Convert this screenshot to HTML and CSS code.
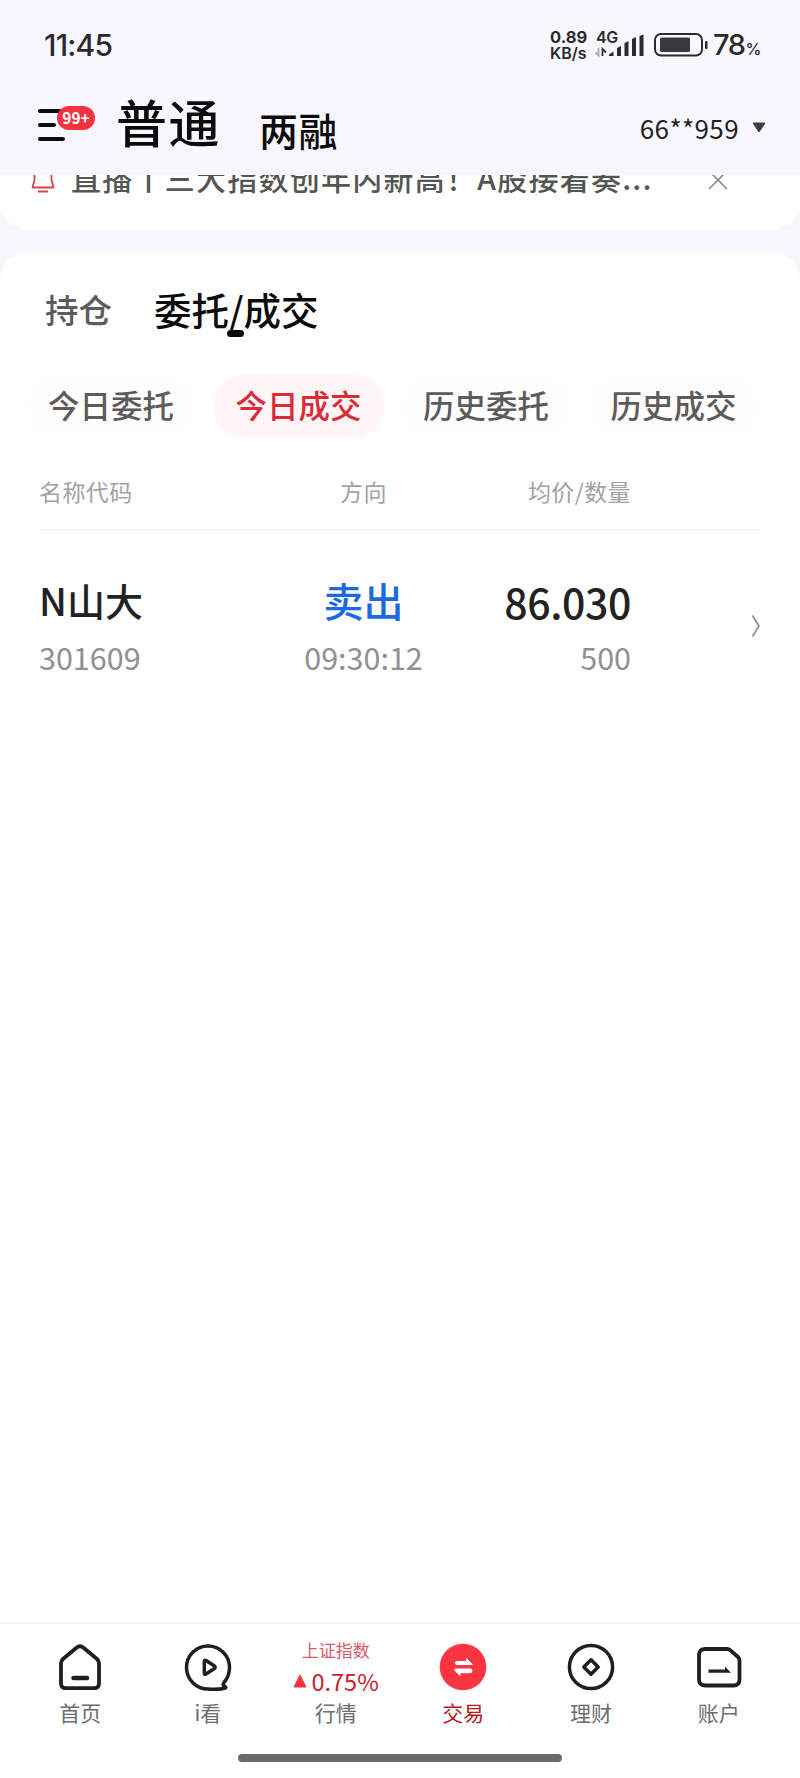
FILE: index.html
```html
<!DOCTYPE html>
<html lang="zh-CN">
<head>
  <meta charset="UTF-8" />
  <meta name="viewport" content="width=device-width, initial-scale=1.0" />
  <title>交易</title>
  <link rel="stylesheet" href="styles.css">
</head>
<body>
  <div class="status-bar">
    <span class="clock">11:45</span>
    <div class="status-right">
      <div class="net-speed"><span>0.89</span><span>KB/s</span></div>
      <div class="signal">
        <span class="signal-type">4G</span>
        <svg width="50" height="24" viewBox="0 0 50 24">
          <path d="M3.500 14v7.500L.5 18.500" fill="none" stroke="#aaa" stroke-width="1.800" />
          <path d="M7.500 22v-7l3.500 3.500" fill="none" stroke="#333" stroke-width="1.900" />
          <path d="M14 22v-1.500l4.500-3V22zM22 22v-8l4-2v10zM29.500 22V9l4-2v15zM37 22V5l4-2v19zM44.500 22V2l4-1.500V22z" fill="#2b2b2d" />
        </svg>
      </div>
      <svg class="battery" width="54" height="24" viewBox="0 0 54 24">
        <rect x="1" y="1" width="47" height="21.500" rx="6" fill="none" stroke="#2b2b2d" stroke-width="2" />
        <rect x="6" y="4.500" width="30" height="14.500" rx="1.500" fill="#3a3a3c" />
        <rect x="51" y="8" width="2.500" height="8" rx="1" fill="#2b2b2d" />
      </svg>
      <span class="percent">78<small>%</small></span>
    </div>
  </div>

  <header>
    <div class="menu">
      <svg width="28" height="34" viewBox="0 0 28 34" stroke="#0c0c0c" stroke-width="4" stroke-linecap="round">
        <path d="M2 3h20M2 17h14M2 31h23" />
      </svg>
      <span class="badge">99+</span>
    </div>
    <h1>普通</h1>
    <h2>两融</h2>
    <div class="account">
      <span>66**959</span>
      <svg width="14" height="11" viewBox="0 0 14 11"><path d="M1 1h12L7 10z" fill="#3d3d3d" stroke="#3d3d3d" stroke-linejoin="round" /></svg>
    </div>
  </header>

  <!-- notice card, partly scrolled under the header -->
  <section class="notice">
    <div class="notice-row">
      <svg class="bell" width="24" height="34" viewBox="0 0 24 34" fill="none" stroke="#d9404e" stroke-width="1.800" stroke-linejoin="round">
        <path d="M3.500 17V11a8.500 8.500 0 0 1 17 0v6l2 7.500H1.500z" />
        <path d="M7 28.500h10" />
      </svg>
      <span class="notice-text">直播丨三大指数创年内新高！A股接着奏...</span>
      <svg class="close" width="20" height="20" viewBox="0 0 20 20" stroke="#888" stroke-width="1.600"><path d="M1 1l18 18M19 1L1 19" /></svg>
    </div>
  </section>

  <main>
    <div class="tabs">
      <span class="tab">持仓</span>
      <span class="tab active">委托/成交</span>
    </div>
    <div class="chips">
      <span class="chip">今日委托</span>
      <span class="chip active">今日成交</span>
      <span class="chip">历史委托</span>
      <span class="chip">历史成交</span>
    </div>
    <div class="row table-head">
      <span>名称代码</span>
      <span class="center">方向</span>
      <span class="right">均价/数量</span>
    </div>
    <div class="row deal">
      <div class="cell">
        <span class="name">N山大</span>
        <span class="sub">301609</span>
      </div>
      <div class="cell center">
        <span class="side">卖出</span>
        <span class="sub">09:30:12</span>
      </div>
      <div class="cell right">
        <span class="price">86.030</span>
        <span class="sub">500</span>
      </div>
      <svg class="more" width="10" height="24" viewBox="0 0 10 24" fill="none" stroke="#8a8a8a" stroke-width="1.600"><path d="M1.500 1.500L8 12 1.500 22.500" /></svg>
    </div>
  </main>

  <nav>
    <a class="nav-item">
      <svg width="48" height="48" viewBox="0 0 48 48" fill="none" stroke="#1f1f1f" stroke-width="3.800" stroke-linejoin="round" stroke-linecap="round">
        <path d="M20.800 4.500Q24 1.900 27.200 4.500L41 16Q43 17.800 43 20.500V40.500Q43 45.200 38.300 45.200H9.700Q5 45.200 5 40.500V20.500Q5 17.800 7 16Z" />
        <path d="M17.500 35H31" stroke-width="4.500" />
      </svg>
      <span>首页</span>
    </a>
    <a class="nav-item">
      <svg width="48" height="48" viewBox="0 0 48 48" fill="none" stroke="#1f1f1f" stroke-width="3.500" stroke-linejoin="round">
        <path d="M40 39.500C43.500 35.500 45.500 30 45.500 24.500A21.500 21.500 0 1 0 24 46C29 46.500 36 46.300 40.500 45.300C43 44.500 41.500 43.500 40 43C38.800 42.300 39 41 40 39.500Z" />
        <path d="M20.300 18.500Q20.300 16.500 22 17.500L30.500 23Q32 24.200 30.500 25.500L22 31Q20.300 32 20.300 30Z" />
      </svg>
      <span>i看</span>
    </a>
    <a class="nav-item">
      <div class="index">
        <span class="index-name">上证指数</span>
        <span class="index-change">
          <svg width="14" height="14" viewBox="0 0 14 14"><path d="M7 1l6 12H1z" fill="#f5333f" stroke="#f5333f" stroke-linejoin="round" /></svg>
          0.75%
        </span>
      </div>
      <span>行情</span>
    </a>
    <a class="nav-item active">
      <svg width="48" height="48" viewBox="0 0 48 48">
        <circle cx="24" cy="24" r="23.300" fill="#fb3640" />
        <path d="M17 18.500H27.500V15.500L33.500 21.500H17Q15.500 20 17 18.500ZM32 26H17Q15 26 16 27.500L21 32.500V29.700H32Q34 28 32 26Z" fill="#fff" stroke="#fff" stroke-width="1" stroke-linejoin="round" />
      </svg>
      <span>交易</span>
    </a>
    <a class="nav-item">
      <svg width="48" height="48" viewBox="0 0 48 48" fill="none" stroke="#1f1f1f" stroke-width="3.500">
        <circle cx="24" cy="24" r="21.600" />
        <path d="M24 16.800L31.200 24 24 31.200 16.800 24z" stroke-linejoin="round" />
      </svg>
      <span>理财</span>
    </a>
    <a class="nav-item">
      <svg width="48" height="48" viewBox="0 0 48 48" fill="none" stroke="#1f1f1f" stroke-width="3.800" stroke-linejoin="round">
        <path d="M9.500 6H32Q34 6 35.500 7.400L43 14Q44.500 15.500 44.500 17.500V36.500Q44.500 42.500 38.500 42.500H10Q4 42.500 4 36.500V12Q4 6 10 6Z" />
        <path d="M13.500 26.500H30V23.500L36 29.800H13.500Z" fill="#1f1f1f" stroke="none" />
      </svg>
      <span>账户</span>
    </a>
  </nav>
  <div class="home-bar"></div>
</body>
</html>
```
FILE: styles.css
```css
:root {
  --page: #f8f7ff;
  --red: #d92b38;
  --text: #222;
  --gray: #909090;
  --cjk: "Noto Sans CJK SC", sans-serif;
}
* {
  box-sizing: border-box;
}
body {
  margin: 0;
  height: 1778px;
  display: flex;
  flex-direction: column;
  overflow: hidden;
  background: var(--page);
  color: var(--text);
  font-family: var(--cjk);
}
svg {
  display: block;
  flex: none;
}

/* status bar */
.status-bar {
  height: 90px;
  padding: 0 39px 0 44px;
  display: flex;
  justify-content: space-between;
  align-items: center;
  font-family: Inter, sans-serif;
  color: #2b2b2d;
}
.clock {
  font-size: 30px;
  font-weight: 500;
  letter-spacing: -0.8px;
}
.status-right {
  display: flex;
  align-items: center;
}
.net-speed {
  width: 45px;
  display: flex;
  flex-direction: column;
  font-size: 16.500px;
  line-height: 16px;
  font-weight: 700;
}
.net-speed span:last-child {
  font-size: 16px;
  font-weight: 600;
}
.signal {
  position: relative;
  width: 59px;
  height: 24px;
  padding-top: 1px;
}
.signal-type {
  position: absolute;
  left: 1px;
  top: -5px;
  font-size: 16px;
  line-height: 18px;
  font-weight: 600;
  letter-spacing: -0.5px;
}
.percent {
  width: 48px;
  margin-left: 5px;
  padding-top: 3px;
  font-size: 29px;
  line-height: 30px;
  font-weight: 500;
  letter-spacing: -1.5px;
  white-space: nowrap;
}
.percent small {
  font-size: 16px;
  margin-left: 1px;
}

/* header */
header {
  height: 85px;
  padding: 0 34px 0 38px;
  display: flex;
}
.menu {
  position: relative;
  width: 78px;
  padding-top: 18px;
}
.badge {
  position: absolute;
  left: 19px;
  top: 16px;
  width: 38px;
  height: 24px;
  border-radius: 12px;
  background: #f5333f;
  color: #fff;
  text-align: center;
  font-size: 15.500px;
  line-height: 23px;
  font-weight: 700;
}
h1, h2 {
  margin: 0;
  color: #0c0c0c;
  font-weight: 500;
  white-space: nowrap;
}
h1 {
  width: 143px;
  font-size: 51px;
  line-height: 62px;
  letter-spacing: 1.500px;
}
h2 {
  font-size: 39px;
  line-height: 79px;
  letter-spacing: 0.500px;
}
.account {
  margin-left: auto;
  height: 74px;
  display: flex;
  align-items: center;
  gap: 13px;
  color: #222;
  font-size: 26px;
  line-height: 71px;
  letter-spacing: 0.400px;
}

/* notice */
.notice {
  height: 55px;
  flex: none;
  overflow: hidden;
  border-radius: 0 0 28px 28px;
  background: #fff;
}
.notice-row {
  height: 40px;
  margin-top: -15px;
  padding: 0 72px 0 31px;
  display: flex;
  align-items: center;
}
.notice-text {
  margin-left: 16px;
  color: #555;
  font-size: 30px;
  line-height: 40px;
  padding-bottom: 7px;
  font-weight: 500;
  letter-spacing: 1.250px;
  white-space: nowrap;
}
.close {
  margin-left: auto;
}

/* orders */
main {
  flex: 1;
  margin-top: 22px;
  border-radius: 28px 28px 0 0;
  background: #fff;
}
.tabs {
  height: 123px;
  padding: 23px 0 0 45px;
  display: flex;
  gap: 42px;
}
.tab {
  color: #5c5c5c;
  font-size: 33.500px;
  line-height: 67px;
  font-weight: 500;
}
.tab.active {
  position: relative;
  height: 68px;
  color: #0c0c0c;
  font-size: 37.500px;
}
.tab.active::after {
  content: "";
  position: absolute;
  left: 50%;
  bottom: 6px;
  width: 17px;
  height: 7px;
  margin-left: -9px;
  border-radius: 4px;
  background: #0c0c0c;
}
.chips {
  padding-left: 26px;
  display: flex;
  gap: 17.500px;
}
.chip {
  width: 170px;
  height: 62px;
  border-radius: 28px;
  background: #fffdfd;
  color: #5c5c5c;
  text-align: center;
  font-size: 31.500px;
  line-height: 59px;
  font-weight: 500;
}
.chip.active {
  background: #fff5f6;
  color: var(--red);
}
.row {
  margin: 0 39px;
  display: grid;
  grid-template-columns: 200px 249px 143px 1fr;
}
.center {
  text-align: center;
}
.right {
  text-align: right;
}
.table-head {
  height: 93px;
  padding-top: 32px;
  border-bottom: 1px solid #efefef;
  color: #a2a2a2;
  font-size: 23px;
  line-height: 44px;
  letter-spacing: 0.400px;
}
.deal {
  padding-top: 42px;
}
.cell {
  display: flex;
  flex-direction: column;
}
.name, .side, .price {
  height: 56px;
  line-height: 56px;
  font-weight: 500;
  white-space: nowrap;
}
.name {
  font-size: 38px;
}
.side {
  color: #1b6ae4;
  font-size: 40px;
}
.price {
  padding-top: 1px;
  font-size: 41px;
  letter-spacing: -0.400px;
}
.sub {
  margin-top: 11px;
  color: var(--gray);
  font-size: 30.500px;
  line-height: 36px;
}
.more {
  margin-top: 42px;
  justify-self: end;
}

/* bottom navigation */
nav {
  height: 121px;
  flex: none;
  padding: 19px 17.500px 0 16.500px;
  display: grid;
  grid-template-columns: repeat(6, 1fr);
  border-top: 2px solid #f4f4f4;
  background: #fff;
}
.nav-item {
  display: flex;
  flex-direction: column;
  align-items: center;
  color: #6c6c70;
  font-size: 21px;
  line-height: 30px;
}
.nav-item > span {
  margin-top: 6px;
}
.nav-item.active {
  color: #b8141f;
}
.index {
  height: 48px;
  display: flex;
  flex-direction: column;
  align-items: center;
  white-space: nowrap;
}
.index-name {
  margin-top: -5px;
  color: #dc5866;
  font-size: 17px;
  line-height: 24px;
}
.index-change {
  margin-top: 4px;
  display: flex;
  align-items: center;
  gap: 5px;
  color: #c9202c;
  font-size: 23.500px;
  line-height: 30px;
}
.home-bar {
  height: 35px;
  flex: none;
  padding-top: 11px;
  background: #fff;
}
.home-bar::before {
  content: "";
  display: block;
  width: 324px;
  height: 8px;
  margin: 0 auto;
  border-radius: 4px;
  background: #6a6a6a;
}
```
